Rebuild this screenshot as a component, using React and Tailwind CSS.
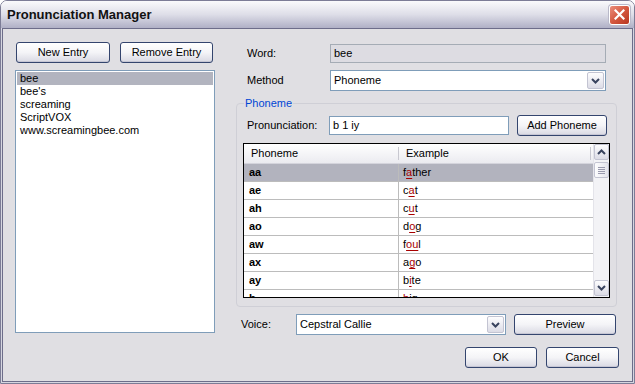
const rows = [
  ["aa", "f", "a", "ther"],
  ["ae", "c", "a", "t"],
  ["ah", "c", "u", "t"],
  ["ao", "d", "o", "g"],
  ["aw", "f", "ou", "l"],
  ["ax", "a", "g", "o"],
  ["ay", "b", "i", "te"],
  ["b", "", "b", "ig"],
];

const entries = ["bee", "bee's", "screaming", "ScriptVOX", "www.screamingbee.com"];

function Chevron({ up }) {
  return (
    <svg width="9" height="6" viewBox="0 0 9 6">
      <path
        d={up ? "M1 5 L4.5 1.5 L8 5" : "M1 1 L4.5 4.5 L8 1"}
        fill="none"
        stroke="#39435e"
        strokeWidth="2"
      />
    </svg>
  );
}

function XpButton({ children, className }) {
  return (
    <button
      className={`flex items-center justify-center rounded-[3px] border border-[#34456e] bg-gradient-to-b from-white via-[#f4f4f7] to-[#d9d9e3] text-[11px] leading-none text-black shadow-[inset_0_-1px_0_#c6c6d4] ${className}`}
    >
      {children}
    </button>
  );
}

function ArrowBox({ up, className }) {
  return (
    <div
      className={`flex items-center justify-center rounded-[2px] border border-[#c3c4d2] bg-gradient-to-b from-[#fdfdfe] to-[#dcdce6] ${className}`}
    >
      <Chevron up={up} />
    </div>
  );
}

function Combo({ value, className }) {
  return (
    <div className={`flex items-center border border-[#7f9db9] bg-white pl-[3px] pr-[1px] ${className}`}>
      <span className="flex-1 text-[11px]">{value}</span>
      <ArrowBox className="h-[17px] w-[17px]" />
    </div>
  );
}

export default function App() {
  return (
    <div className="h-[384px] w-[635px] bg-white font-['Liberation_Sans',Arial,sans-serif] text-black">
      <div className="flex h-full w-full flex-col overflow-hidden rounded-t-[7px] border border-[#7c7c96]">
        {/* title bar */}
        <div className="flex h-[27px] items-center bg-gradient-to-b from-[#fafafc] via-[#dedee8] to-[#b0b0c6] pl-[6px] pr-[4px]">
          <span className="flex-1 text-[13px] font-bold text-[#111]">Pronunciation Manager</span>
          <div className="flex h-[20px] w-[21px] items-center justify-center rounded-[3px] border border-white bg-gradient-to-br from-[#ea8d7c] via-[#d4583f] to-[#b8361f] shadow-[0_0_0_1px_#b9b9c9]">
            <svg width="11" height="11" viewBox="0 0 11 11">
              <path d="M1.5 1.5 L9.5 9.5 M9.5 1.5 L1.5 9.5" stroke="white" strokeWidth="2.2" strokeLinecap="square" />
            </svg>
          </div>
        </div>

        {/* frame */}
        <div className="flex flex-1 bg-[#d6d6e0] px-[1px] pb-[1px]">
          <div className="flex flex-1 border border-[#6d6d8a] bg-[#e0dfe3]">
            {/* left column */}
            <div className="ml-[12px] flex w-[200px] flex-col pt-[13px]">
              <div className="flex h-[21px]">
                <XpButton className="ml-[1px] w-[94px]">New Entry</XpButton>
                <XpButton className="ml-[10px] w-[93px]">Remove Entry</XpButton>
              </div>
              <div className="mt-[7px] h-[263px] border border-[#7f9db9] bg-white p-[1px]">
                {entries.map((e, i) => (
                  <div
                    key={e}
                    className={`h-[13px] pl-[3px] text-[11px] leading-[13px] ${i === 0 ? "bg-[#b2b4bf]" : ""}`}
                  >
                    {e}
                  </div>
                ))}
              </div>
            </div>

            {/* right column */}
            <div className="ml-[20px] flex w-[384px] flex-col pt-[15px] text-[11px]">
              <div className="flex h-[19px] items-center">
                <span className="w-[95px] pl-[12px]">Word:</span>
                <div className="flex h-[19px] w-[276px] items-center border border-[#a5acb5] bg-[#dddce2] pl-[3px]">bee</div>
              </div>
              <div className="mt-[7px] flex h-[21px] items-center">
                <span className="w-[95px] pl-[12px]">Method</span>
                <Combo value="Phoneme" className="h-[21px] w-[276px]" />
              </div>

              {/* group box */}
              <div className="relative ml-[1px] mt-[12px] h-[204px] w-[381px] rounded-[4px] border border-[#cfcfd6] pt-[11px]">
                <span className="absolute left-[7px] top-[-7px] bg-[#e0dfe3] px-[1px] leading-[12px] text-[#0046d5]">Phoneme</span>
                <div className="flex h-[21px] items-center">
                  <span className="w-[92px] pl-[10px]">Pronunciation:</span>
                  <div className="flex h-[19px] w-[180px] items-center border border-[#7f9db9] bg-white pl-[3px]">b 1 iy</div>
                  <XpButton className="ml-[8px] h-[21px] w-[90px]">Add Phoneme</XpButton>
                </div>

                {/* table */}
                <div className="ml-[6px] mt-[7px] flex h-[155px] w-[367px] overflow-hidden border border-black bg-white">
                  <div className="flex w-[349px] flex-col">
                    <div className="flex h-[20px] shrink-0 items-center border-b border-[#d4d4dc] bg-gradient-to-b from-white to-[#ebebf0]">
                      <span className="w-[154px] pl-[7px]">Phoneme</span>
                      <span className="h-[13px] w-px bg-[#c8c8d0]" />
                      <span className="flex-1 pl-[7px]">Example</span>
                      <span className="mr-[2px] h-[13px] w-px bg-[#c8c8d0]" />
                    </div>
                    {rows.map(([p, a, r, b], i) => (
                      <div
                        key={p}
                        className={`flex h-[18px] shrink-0 border-b border-[#bcbcbc] ${i === 0 ? "bg-[#b2b3be]" : ""}`}
                      >
                        <span className="flex w-[155px] items-center border-r border-[#bcbcbc] pl-[5px] font-bold">{p}</span>
                        <span className="flex items-center pl-[4px]">
                          {a}
                          <span className="text-[#a80000] underline decoration-[#a80000] underline-offset-[2px]">{r}</span>
                          {b}
                        </span>
                      </div>
                    ))}
                  </div>
                  {/* scrollbar */}
                  <div className="flex w-[16px] flex-col border-l border-[#e4e4ea] bg-[#f3f3f6]">
                    <ArrowBox up className="h-[16px] w-[15px]" />
                    <div className="mt-[2px] flex h-[16px] w-[15px] flex-col items-center justify-center gap-[1px] rounded-[2px] border border-[#c3c4d2] bg-gradient-to-r from-[#fdfdfe] to-[#e4e4ec]">
                      <span className="h-px w-[7px] bg-[#9a9aae]" />
                      <span className="h-px w-[7px] bg-[#9a9aae]" />
                      <span className="h-px w-[7px] bg-[#9a9aae]" />
                      <span className="h-px w-[7px] bg-[#9a9aae]" />
                    </div>
                    <div className="flex-1" />
                    <ArrowBox className="mb-[1px] h-[16px] w-[15px]" />
                  </div>
                </div>
              </div>

              {/* voice row */}
              <div className="mt-[7px] flex h-[21px] items-center">
                <span className="w-[61px] pl-[6px]">Voice:</span>
                <Combo value="Cepstral Callie" className="h-[21px] w-[210px]" />
                <XpButton className="ml-[8px] h-[21px] w-[102px]">Preview</XpButton>
              </div>

              <div className="mt-[12px] flex h-[21px] justify-end">
                <XpButton className="w-[72px]">OK</XpButton>
                <XpButton className="ml-[9px] w-[73px]">Cancel</XpButton>
              </div>
            </div>
          </div>
        </div>
      </div>
    </div>
  );
}
